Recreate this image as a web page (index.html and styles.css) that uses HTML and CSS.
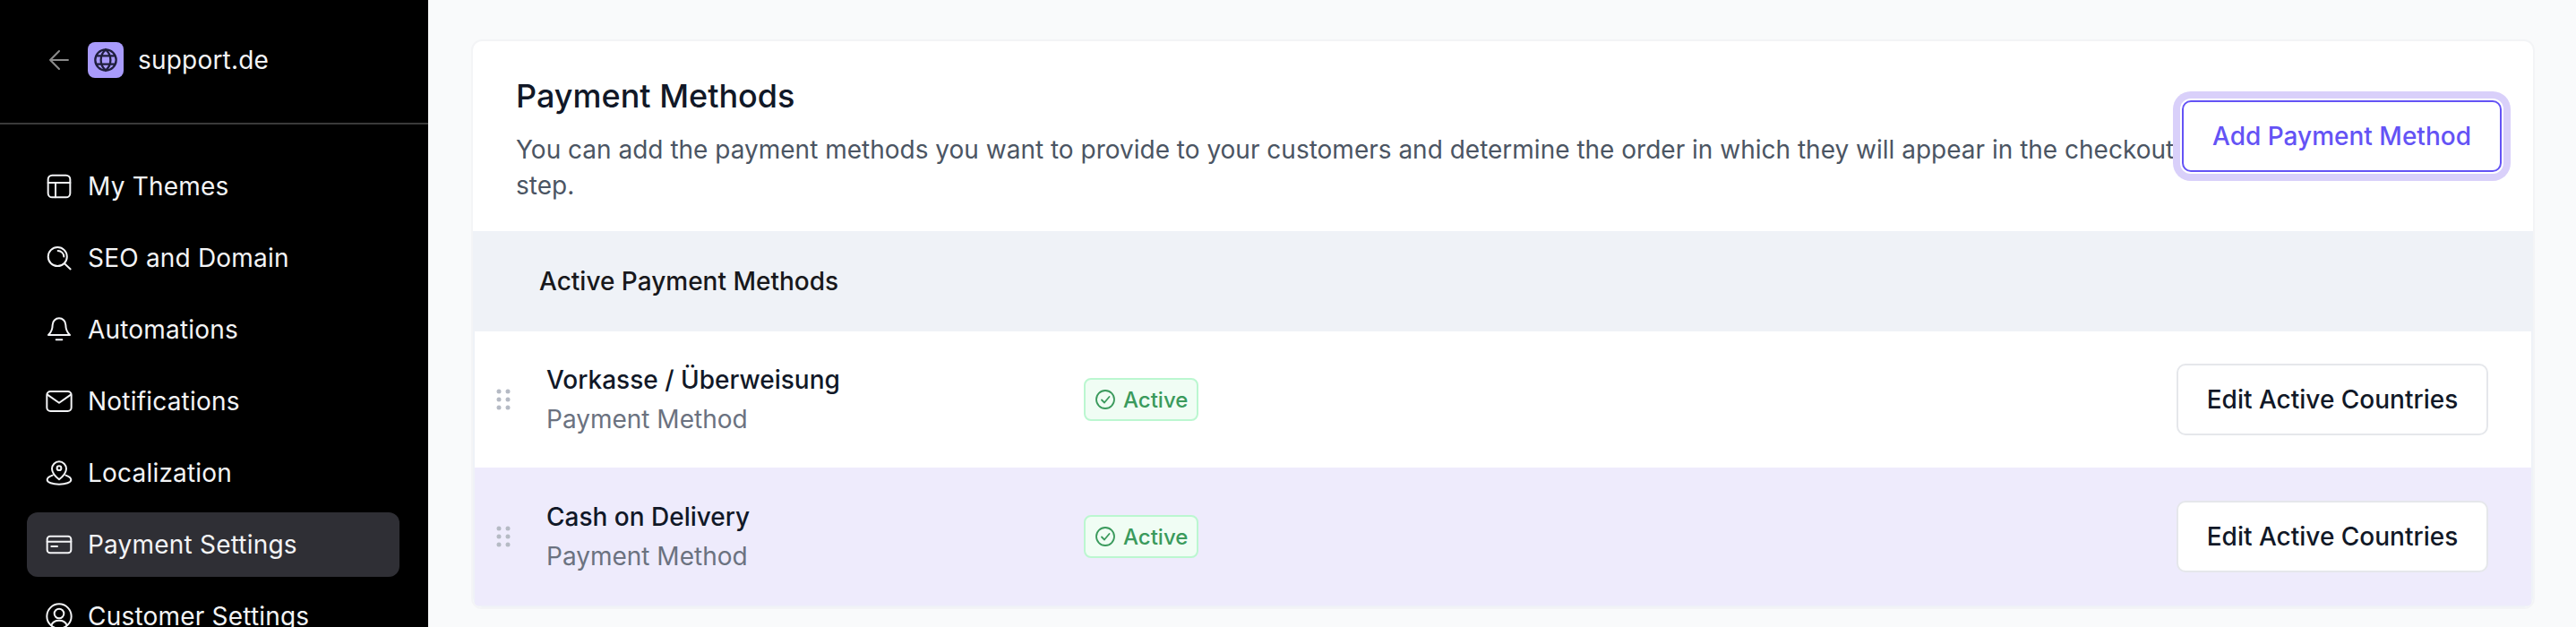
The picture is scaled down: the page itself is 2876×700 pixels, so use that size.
FILE: index.html
```html
<!DOCTYPE html>
<html lang="en">
<head>
<meta charset="utf-8">
<title>Payment Methods</title>
<link rel="stylesheet" href="styles.css">
</head>
<body>
<div class="app">
  <aside class="sidebar">
    <div class="brand">
      <svg class="back" viewBox="0 0 24 24" fill="none" stroke="currentColor" stroke-width="1.800" stroke-linecap="round" stroke-linejoin="round"><path d="M20.500 12H3.500M12 3.500L3.500 12l8.500 8.500"/></svg>
      <span class="logo">
        <svg viewBox="0 0 24 24" fill="none" stroke="currentColor" stroke-width="2"><circle cx="12" cy="12" r="10"/><path d="M2.800 8h18.400M2.800 16h18.400M12 2c3.200 2.800 4.600 6.300 4.600 10s-1.400 7.200-4.600 10c-3.200-2.800-4.600-6.300-4.600-10S8.800 4.800 12 2z"/></svg>
      </span>
      <span class="site">support.de</span>
    </div>
    <nav class="nav">
      <a class="nav-item">
        <svg viewBox="0 0 24 24"><rect x="2.750" y="2.750" width="18.500" height="18.500" rx="3.500"/><path d="M2.750 9h18.500M9 9v12.250"/></svg>
        <span>My Themes</span>
      </a>
      <a class="nav-item">
        <svg viewBox="0 0 24 24"><circle cx="10.700" cy="10.900" r="7.900"/><path d="M16.500 16.700l5 4.600M11 6a5 5 0 0 1 5 4.900"/></svg>
        <span>SEO and Domain</span>
      </a>
      <a class="nav-item">
        <svg viewBox="0 0 24 24"><path d="M6.500 8a5.500 5.500 0 0 1 11 0c0 3.500 1 6 3.500 8.500H3C5.500 14 6.500 11.500 6.500 8z"/><path d="M9.500 20.500h5"/></svg>
        <span>Automations</span>
      </a>
      <a class="nav-item">
        <svg viewBox="0 0 24 24"><rect x="1.750" y="3.750" width="20.500" height="16.500" rx="3"/><path d="M2.200 6.500l9.800 6.800 9.800-6.800"/></svg>
        <span>Notifications</span>
      </a>
      <a class="nav-item">
        <svg viewBox="0 0 24 24"><path d="M12 17.500c-3.800-3-6-5.700-6-9a6 6 0 0 1 12 0c0 3.300-2.200 6-6 9z"/><circle cx="12" cy="8" r="1.800"/><path d="M6.500 14C4 14.800 2 16 2 17.800c0 2.200 4.500 3.700 10 3.700s10-1.500 10-3.700C22 16 20 14.800 17.500 14"/></svg>
        <span>Localization</span>
      </a>
      <a class="nav-item active">
        <svg viewBox="0 0 24 24"><rect x="2" y="5" width="20" height="14" rx="2.500"/><path d="M2 9.500h20M5.500 13.500h5"/></svg>
        <span>Payment Settings</span>
      </a>
      <a class="nav-item">
        <svg viewBox="0 0 24 24"><circle cx="12" cy="12" r="10.250"/><circle cx="12" cy="9.750" r="4"/><path d="M5.500 19.500c1-2.700 3.500-4 6.500-4s5.500 1.300 6.500 4"/></svg>
        <span>Customer Settings</span>
      </a>
    </nav>
  </aside>
  <main class="main">
    <section class="card">
      <header class="card-head">
        <div class="head-text">
          <h1 class="title">Payment Methods</h1>
          <p class="desc">You can add the payment methods you want to provide to your customers and determine the order in which they will appear in the checkout step.</p>
        </div>
        <button class="btn-add">Add Payment Method</button>
      </header>
      <div class="methods">
        <h2 class="methods-title">Active Payment Methods</h2>
        <div class="row">
          <svg class="grip" viewBox="0 0 16 24"><circle cx="3" cy="3" r="2.500"/><circle cx="13" cy="3" r="2.500"/><circle cx="3" cy="12" r="2.500"/><circle cx="13" cy="12" r="2.500"/><circle cx="3" cy="21" r="2.500"/><circle cx="13" cy="21" r="2.500"/></svg>
          <div class="row-text">
            <div class="row-name">Vorkasse / Überweisung</div>
            <div class="row-sub">Payment Method</div>
          </div>
          <span class="badge">
            <svg viewBox="0 0 24 24"><circle cx="12" cy="12" r="10"/><path d="M8 12.500l3 3 5.500-6.500"/></svg>
            Active
          </span>
          <button class="btn-edit">Edit Active Countries</button>
        </div>
        <div class="row row-alt">
          <svg class="grip" viewBox="0 0 16 24"><circle cx="3" cy="3" r="2.500"/><circle cx="13" cy="3" r="2.500"/><circle cx="3" cy="12" r="2.500"/><circle cx="13" cy="12" r="2.500"/><circle cx="3" cy="21" r="2.500"/><circle cx="13" cy="21" r="2.500"/></svg>
          <div class="row-text">
            <div class="row-name">Cash on Delivery</div>
            <div class="row-sub">Payment Method</div>
          </div>
          <span class="badge">
            <svg viewBox="0 0 24 24"><circle cx="12" cy="12" r="10"/><path d="M8 12.500l3 3 5.500-6.500"/></svg>
            Active
          </span>
          <button class="btn-edit">Edit Active Countries</button>
        </div>
      </div>
    </section>
  </main>
</div>
</body>
</html>
```
FILE: styles.css
```css
* { box-sizing: border-box; }
html, body { margin: 0; height: 700px; overflow: hidden; }
body { font-family: Inter, "Liberation Sans", sans-serif; background: #f9fafb; color: #111827; }
.app { display: flex; height: 700px; }

.sidebar { width: 478px; flex: none; background: #000; color: #f3f4f6; overflow: hidden; }
.brand { display: flex; align-items: center; height: 139px; padding: 0 0 4px 52px; border-bottom: 2px solid #3a3a3a; }
.back { width: 28px; height: 28px; color: #8a8a8a; flex: none; margin-right: 18px; }
.logo { width: 40px; height: 40px; border-radius: 8px; background: #a99bfb; color: #1f1f3d; display: flex; align-items: center; justify-content: center; flex: none; margin-right: 16px; }
.logo svg { width: 28px; height: 28px; }
.site { font-size: 28px; line-height: 40px; font-weight: 400; letter-spacing: .2px; }

.nav { display: flex; flex-direction: column; gap: 8px; padding: 33px 32px 0 30px; }
.nav-item { display: flex; align-items: center; gap: 16px; height: 72px; padding: 0 18px 0 20px; border-radius: 12px; font-size: 28px; letter-spacing: .2px; color: #f3f4f6; flex: none; }
.nav-item svg { width: 32px; height: 32px; flex: none; fill: none; stroke: currentColor; stroke-width: 1.500; stroke-linecap: round; stroke-linejoin: round; }
.nav-item.active { background: #2f2f35; }

.main { flex: 1; min-width: 0; padding: 44px 46px 20px 48px; }
.card { background: #fff; border: 2px solid #f3f4f6; border-radius: 12px; overflow: hidden; }
.card-head { display: flex; align-items: center; height: 212px; padding: 0 35px 0 48px; }
.head-text { flex: 1; min-width: 0; margin-top: 2px; }
.title { margin: 0 0 12px; font-size: 36px; line-height: 56px; font-weight: 450; color: #111827; }
.desc { margin: 0; font-size: 28px; line-height: 40px; color: #4b5563; }
.btn-add { flex: none; width: 357px; height: 80px; border: 2px solid #6453f5; border-radius: 10px; background: #fff; color: #6453f5; font: 450 28px Inter, sans-serif; box-shadow: 0 0 0 2px #fff, 0 0 0 10px #d9d0fa; }

.methods { background: #eff2f7; padding: 0 2px 2px; }
.methods-title { margin: 0; height: 112px; display: flex; align-items: center; padding-left: 72px; font-size: 28px; font-weight: 450; color: #18181b; }
.row { display: flex; align-items: center; height: 152px; background: #fff; padding: 0 48px 0 24px; }
.row-alt { height: 154px; background: #eeebfc; }
.grip { width: 16px; height: 24px; flex: none; fill: #b5bac4; margin-right: 40px; }
.row-text { width: 600px; flex: none; }
.row-name { font-size: 28px; line-height: 40px; font-weight: 450; color: #111827; }
.row-sub { margin-top: 4px; font-size: 28px; line-height: 40px; color: #6b7280; }
.badge { display: inline-flex; align-items: center; gap: 8px; width: 128px; height: 48px; padding-left: 10px; border: 2px solid #bbf7d0; border-radius: 8px; background: #f0fdf4; color: #3a9a5c; font-size: 24px; font-weight: 450; }
.badge svg { width: 24px; height: 24px; flex: none; fill: none; stroke: currentColor; stroke-width: 1.800; stroke-linecap: round; stroke-linejoin: round; }
.btn-edit { margin-left: auto; width: 348px; height: 80px; border: 2px solid #e5e7eb; border-radius: 10px; background: #fff; color: #111827; font: 450 28px Inter, sans-serif; }
```
